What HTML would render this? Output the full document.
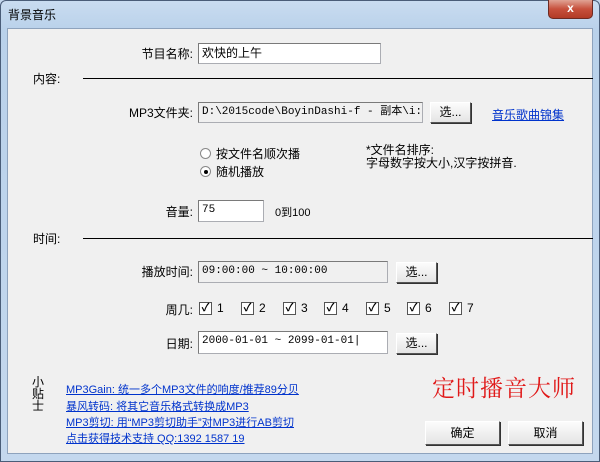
<!DOCTYPE html>
<html><head><meta charset="utf-8"><style>
*{margin:0;padding:0;box-sizing:border-box}
body{width:600px;height:462px;position:relative;overflow:hidden;background:#c4d8ee;font-family:"Liberation Sans","Noto Sans CJK SC",sans-serif;font-size:12px;color:#000}
.frame{position:absolute;left:0;top:0;width:600px;height:462px;background:linear-gradient(to bottom,#c9dcf0 0,#b9d1ea 30px,#c4d8ee 100%);border:1px solid #4a5d78;border-radius:6px 6px 0 0}
.title{position:absolute;left:8px;top:6px;font-size:12px}
.close{position:absolute;left:548px;top:0;width:45px;height:19px;border:1px solid #6d2a22;border-top:none;border-radius:0 0 5px 5px;background:linear-gradient(#e0a394,#c7503c 50%,#b23b26);color:#fff;font-weight:bold;text-align:center;line-height:17px;font-size:12px}
.client{position:absolute;left:7px;top:28px;width:586px;height:426px;background:#f0f0f0;border:1px solid #8ea3bd}
.a{position:absolute;white-space:nowrap}
.lbl{position:absolute;white-space:nowrap;text-align:right;width:120px}
.in{position:absolute;background:#fff;border:1px solid #abadb3;border-top-color:#7a7a7a;border-left-color:#7a7a7a;font-family:"Liberation Mono","Noto Sans CJK SC",monospace;font-size:11px;padding:2px 3px;line-height:15px;white-space:nowrap;overflow:hidden}
.ro{background:#f0f0f0}
.btn{position:absolute;background:linear-gradient(#fcfcfc,#e4e4e4);border:1px solid #707070;border-color:#fff #555 #555 #fff;box-shadow:1px 1px 0 #333;text-align:center;line-height:19px;font-size:12px}
.line{position:absolute;height:1px;background:#000}
.lnk{position:absolute;color:#0033cc;text-decoration:underline;white-space:nowrap;font-size:11px}
.cb{position:absolute;width:13px;height:13px;border:1px solid #555;background:#fff;font-size:11px;line-height:10px;text-align:center;font-weight:bold}
.rd{position:absolute;width:11px;height:11px;border:1px solid #888;border-radius:50%;background:#fff}
</style></head><body>
<div class="frame"></div>
<div class="title">背景音乐</div>
<div class="close">x</div>
<div class="client"></div>

<div class="lbl" style="left:73px;top:45px">节目名称:</div>
<div class="in" style="left:198px;top:43px;width:183px;height:21px;font-family:'Noto Sans CJK SC',sans-serif;font-size:12px;padding-top:1px">欢快的上午</div>

<div class="a" style="left:33px;top:70px">内容:</div>
<div class="line" style="left:83px;top:78px;width:510px"></div>

<div class="lbl" style="left:73px;top:104px">MP3文件夹:</div>
<div class="in ro" style="left:198px;top:102px;width:225px;height:21px">D:\2015code\BoyinDashi-f - 副本\i:</div>
<div class="btn" style="left:430px;top:102px;width:41px;height:21px">选...</div>
<div class="lnk" style="left:492px;top:106px;font-size:12px">音乐歌曲锦集</div>

<div class="rd" style="left:200px;top:148px"></div>
<div class="a" style="left:216px;top:145px">按文件名顺次播</div>
<div class="rd" style="left:200px;top:166px"></div>
<div style="position:absolute;left:204px;top:170px;width:4px;height:4px;border-radius:50%;background:#000"></div>
<div class="a" style="left:216px;top:163px">随机播放</div>
<div class="a" style="left:366px;top:144px;line-height:13px">*文件名排序:<br>字母数字按大小,汉字按拼音.</div>

<div class="lbl" style="left:73px;top:203px">音量:</div>
<div class="in" style="left:198px;top:200px;width:66px;height:22px">75</div>
<div class="a" style="left:275px;top:204px;font-size:11px">0到100</div>

<div class="a" style="left:33px;top:230px">时间:</div>
<div class="line" style="left:83px;top:238px;width:510px"></div>

<div class="lbl" style="left:73px;top:263px">播放时间:</div>
<div class="in ro" style="left:198px;top:261px;width:190px;height:22px">09:00:00 ~ 10:00:00</div>
<div class="btn" style="left:396px;top:262px;width:41px;height:21px">选...</div>

<div class="lbl" style="left:73px;top:301px">周几:</div>
<div class="cb" style="left:199px;top:302px">✓</div><div class="a" style="left:217px;top:301px">1</div>
<div class="cb" style="left:241px;top:302px">✓</div><div class="a" style="left:259px;top:301px">2</div>
<div class="cb" style="left:283px;top:302px">✓</div><div class="a" style="left:301px;top:301px">3</div>
<div class="cb" style="left:324px;top:302px">✓</div><div class="a" style="left:342px;top:301px">4</div>
<div class="cb" style="left:366px;top:302px">✓</div><div class="a" style="left:384px;top:301px">5</div>
<div class="cb" style="left:407px;top:302px">✓</div><div class="a" style="left:425px;top:301px">6</div>
<div class="cb" style="left:449px;top:302px">✓</div><div class="a" style="left:467px;top:301px">7</div>

<div class="lbl" style="left:73px;top:335px">日期:</div>
<div class="in" style="left:198px;top:331px;width:190px;height:23px">2000-01-01 ~ 2099-01-01|</div>
<div class="btn" style="left:396px;top:333px;width:41px;height:21px">选...</div>

<div class="a" style="left:32px;top:376px;line-height:12px;width:12px;white-space:normal">小贴士</div>
<div class="lnk" style="left:66px;top:381px">MP3Gain: 统一多个MP3文件的响度/推荐89分贝</div>
<div class="lnk" style="left:66px;top:398px">暴风转码: 将其它音乐格式转换成MP3</div>
<div class="lnk" style="left:66px;top:414px">MP3剪切: 用“MP3剪切助手”对MP3进行AB剪切</div>
<div class="lnk" style="left:66px;top:430px">点击获得技术支持 QQ:1392 1587 19</div>

<div class="a" style="left:432px;top:370px;color:#e01818;font-family:'Noto Serif CJK SC',serif;font-size:23px;letter-spacing:1px">定时播音大师</div>

<div class="btn" style="left:425px;top:421px;width:75px;height:24px;line-height:22px">确定</div>
<div class="btn" style="left:508px;top:421px;width:75px;height:24px;line-height:22px">取消</div>
</body></html>
